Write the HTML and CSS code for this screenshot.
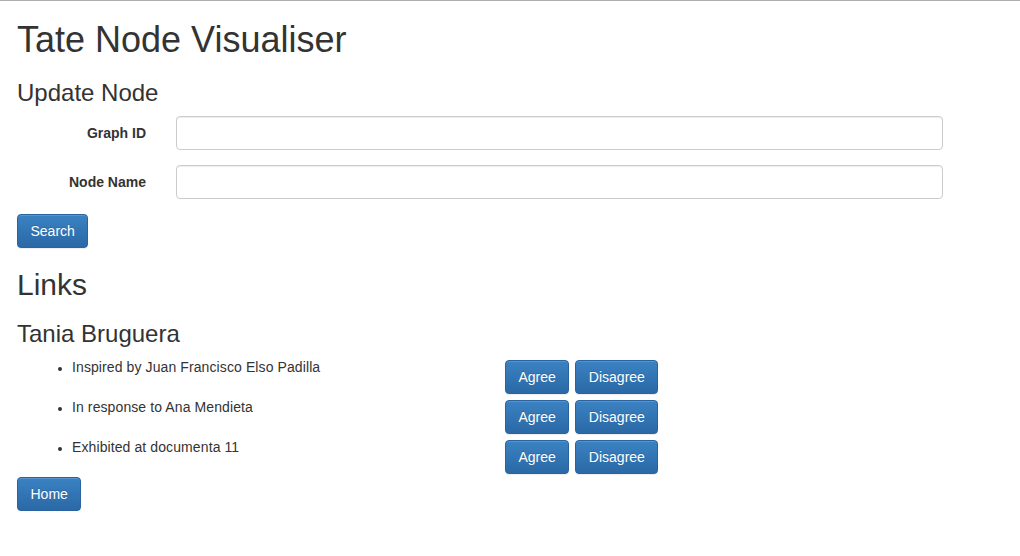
FILE: index.html
```html
<!DOCTYPE html>
<html lang="en">
<head>
<meta charset="utf-8">
<title>Tate Node Visualiser</title>
<link rel="stylesheet" href="styles.css">
</head>
<body>
<div class="top-rule"></div>
<div class="page">
  <h1 class="title">Tate Node Visualiser</h1>
  <h3 class="subtitle">Update Node</h3>
  <form class="node-form">
    <div class="form-row">
      <label class="form-label" for="graph-id">Graph ID</label>
      <input class="form-control" id="graph-id" type="text">
    </div>
    <div class="form-row">
      <label class="form-label" for="node-name">Node Name</label>
      <input class="form-control" id="node-name" type="text">
    </div>
    <div class="form-actions">
      <button class="btn" type="button">Search</button>
    </div>
  </form>
  <h2 class="section-title">Links</h2>
  <h3 class="subtitle">Tania Bruguera</h3>
  <ul class="links">
    <li class="link-row">
      <span class="bullet"></span>
      <span class="link-text">Inspired by Juan Francisco Elso Padilla</span>
      <div class="actions"><button class="btn" type="button">Agree</button><button class="btn" type="button">Disagree</button></div>
    </li>
    <li class="link-row">
      <span class="bullet"></span>
      <span class="link-text">In response to Ana Mendieta</span>
      <div class="actions"><button class="btn" type="button">Agree</button><button class="btn" type="button">Disagree</button></div>
    </li>
    <li class="link-row">
      <span class="bullet"></span>
      <span class="link-text">Exhibited at documenta 11</span>
      <div class="actions"><button class="btn" type="button">Agree</button><button class="btn" type="button">Disagree</button></div>
    </li>
  </ul>
  <button class="btn" type="button">Home</button>
</div>
</body>
</html>
```

FILE: styles.css
```css
html, body {
  margin: 0;
  padding: 0;
  background: #fff;
}
body {
  font-family: "Liberation Sans", Arial, Helvetica, sans-serif;
  font-size: 14px;
  line-height: 20px;
  color: #333;
}
.top-rule {
  height: 1px;
  background: #adadad;
}
.page {
  padding: 0 0 0 17px;
  width: 926px;
}
.title {
  font-size: 36px;
  font-weight: normal;
  line-height: 39.6px;
  margin: 19px 0 10px;
}
.subtitle {
  font-size: 24px;
  font-weight: normal;
  line-height: 26.4px;
  margin: 20px 0 10px;
}
.section-title {
  font-size: 30px;
  font-weight: normal;
  line-height: 33px;
  margin: 20px 0 10px;
}
.node-form {
  margin: 0;
}
.form-row {
  display: grid;
  grid-template-columns: 129px 767px;
  column-gap: 30px;
  margin-bottom: 15px;
}
.form-label {
  font-weight: bold;
  text-align: right;
  padding-top: 7px;
  line-height: 20px;
}
.form-control {
  box-sizing: border-box;
  height: 34px;
  width: 100%;
  padding: 6px 12px;
  font: inherit;
  color: #555;
  background: #fff;
  border: 1px solid #ccc;
  border-radius: 4px;
  box-shadow: inset 0 1px 1px rgba(0,0,0,.075);
  margin: 0;
}
.form-actions {
  margin-bottom: 15px;
}
.btn {
  display: inline-block;
  box-sizing: border-box;
  height: 34px;
  padding: 6px 12.5px;
  margin: 0;
  font-family: inherit;
  font-size: 14px;
  line-height: 20px;
  color: #fff;
  background-color: #3272b2;
  background-image: linear-gradient(to bottom, #3b82c2 0, #2b68a6 100%);
  border: 1px solid #2a64a0;
  border-radius: 4px;
  text-shadow: 0 -1px 0 rgba(0,0,0,.15);
  box-shadow: inset 0 1px 0 rgba(255,255,255,.15), 0 1px 1px rgba(0,0,0,.075);
  cursor: pointer;
}
.links {
  list-style: none;
  margin: 0;
  padding: 0 0 0 40px;
}
.link-row {
  display: grid;
  grid-template-columns: 15px 433px auto;
  height: 40px;
  align-items: start;
}
.bullet {
  width: 4px;
  height: 4px;
  border-radius: 50%;
  background: #333;
  margin: 10px 0 0 1px;
}
.link-text {
  line-height: 20px;
  letter-spacing: 0.1px;
}
.actions {
  display: flex;
  gap: 6px;
  padding-top: 3px;
}
```
